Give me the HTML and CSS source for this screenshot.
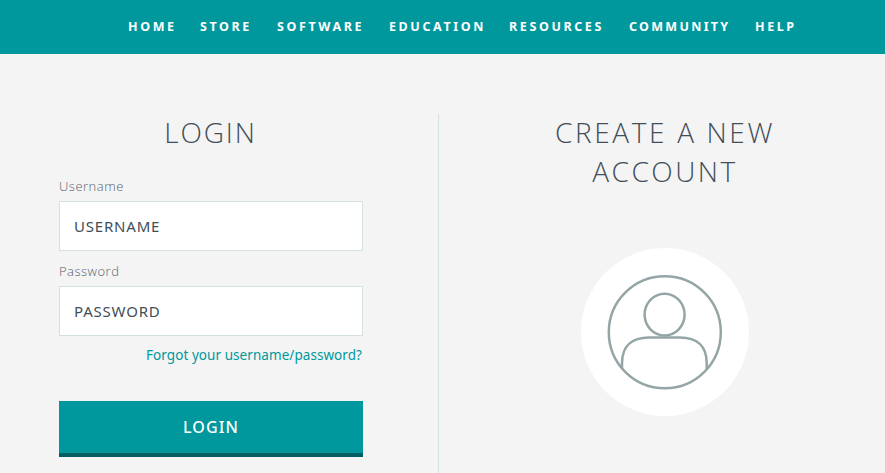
FILE: index.html
```
<!DOCTYPE html>
<html lang="en">
<head>
<meta charset="utf-8">
<title>Login</title>
<link rel="stylesheet" href="styles.css">
</head>
<body>
<nav class="nav">
<a>HOME</a><a>STORE</a><a>SOFTWARE</a><a>EDUCATION</a><a>RESOURCES</a><a class="nav-tight">COMMUNITY</a><a>HELP</a>
</nav>
<main class="columns">
<section class="login">
<h1 class="title"><span class="t-login">LOGIN</span></h1>
<form>
<label class="label" for="user">Username</label>
<input class="field" id="user" type="text" placeholder="USERNAME">
<label class="label" for="pass">Password</label>
<input class="field" id="pass" type="password" placeholder="PASSWORD">
<a class="forgot">Forgot your username/password?</a>
<button class="submit" type="button">LOGIN</button>
</form>
</section>
<section class="create">
<h2 class="title"><span class="t-create">CREATE A NEW</span><br><span class="t-account">ACCOUNT</span></h2>
<svg class="avatar" viewBox="0 0 168 168" fill="none" stroke="#94a5a6" stroke-width="2.5">
<circle cx="84" cy="84" r="84" fill="#fff" stroke="none"/>
<circle cx="83.8" cy="84.2" r="56"/>
<ellipse cx="83.6" cy="66.6" rx="20" ry="20.9"/>
<path d="M41 120.500V115C41 98 51 89.500 68 89.500H99C116 89.500 125.700 98 125.700 115V122"/>
</svg>
</section>
</main>
</body>
</html>
```
FILE: styles.css
```
* { box-sizing: border-box; }
body { margin: 0; height: 473px; overflow: hidden; background: #f4f4f4; color: #414e59; font-family: "Noto Sans", sans-serif; }
.nav { height: 54px; padding-left: 128px; display: grid; grid-template-columns: 72px 77px 112px 120px 120px 126px auto; background: #00989d; color: #fff; font: bold 12.5px/54px "Noto Sans", sans-serif; letter-spacing: 2.6px; white-space: nowrap; }
.nav-tight { letter-spacing: 2.3px; }
.columns { display: flex; height: 359px; margin-top: 60px; }
.login { flex: none; width: 439px; padding: 0 76px 0 59px; border-right: 1px solid #d5e1e0; }
.create { flex: none; width: 452px; display: flex; flex-direction: column; align-items: center; }
.title { margin: -1px 0 0; font: 300 28px/39px "Open Sans", sans-serif; text-align: center; white-space: nowrap; }
.login .title { height: 62px; }
.create .title { height: 135px; }
.t-login { letter-spacing: 1.9px; }
.t-create { letter-spacing: 2.65px; }
.t-account { letter-spacing: 2.5px; }
.label { display: block; height: 26px; font: 300 13px/22px "Open Sans", sans-serif; letter-spacing: .5px; color: #56626c; }
.field { display: block; width: 304px; height: 50px; margin: 0 0 9px; padding: 0 14px; border: 1px solid #d5e1e0; border-radius: 0; background: #fff; font: 15px "Noto Sans", sans-serif; letter-spacing: .8px; }
.field::placeholder { color: #414e59; opacity: 1; }
.forgot { display: block; height: 56px; padding-top: 1px; text-align: right; font-size: 13.5px; line-height: 19px; letter-spacing: .06px; color: #00989d; white-space: nowrap; }
.submit { display: block; width: 304px; height: 56px; padding: 0; border: 0; border-bottom: 4px solid #006064; background: #00989d; color: #fff; font: 500 16px "Noto Sans", sans-serif; letter-spacing: 1.1px; }
.avatar { width: 168px; height: 168px; flex: none; }
```
